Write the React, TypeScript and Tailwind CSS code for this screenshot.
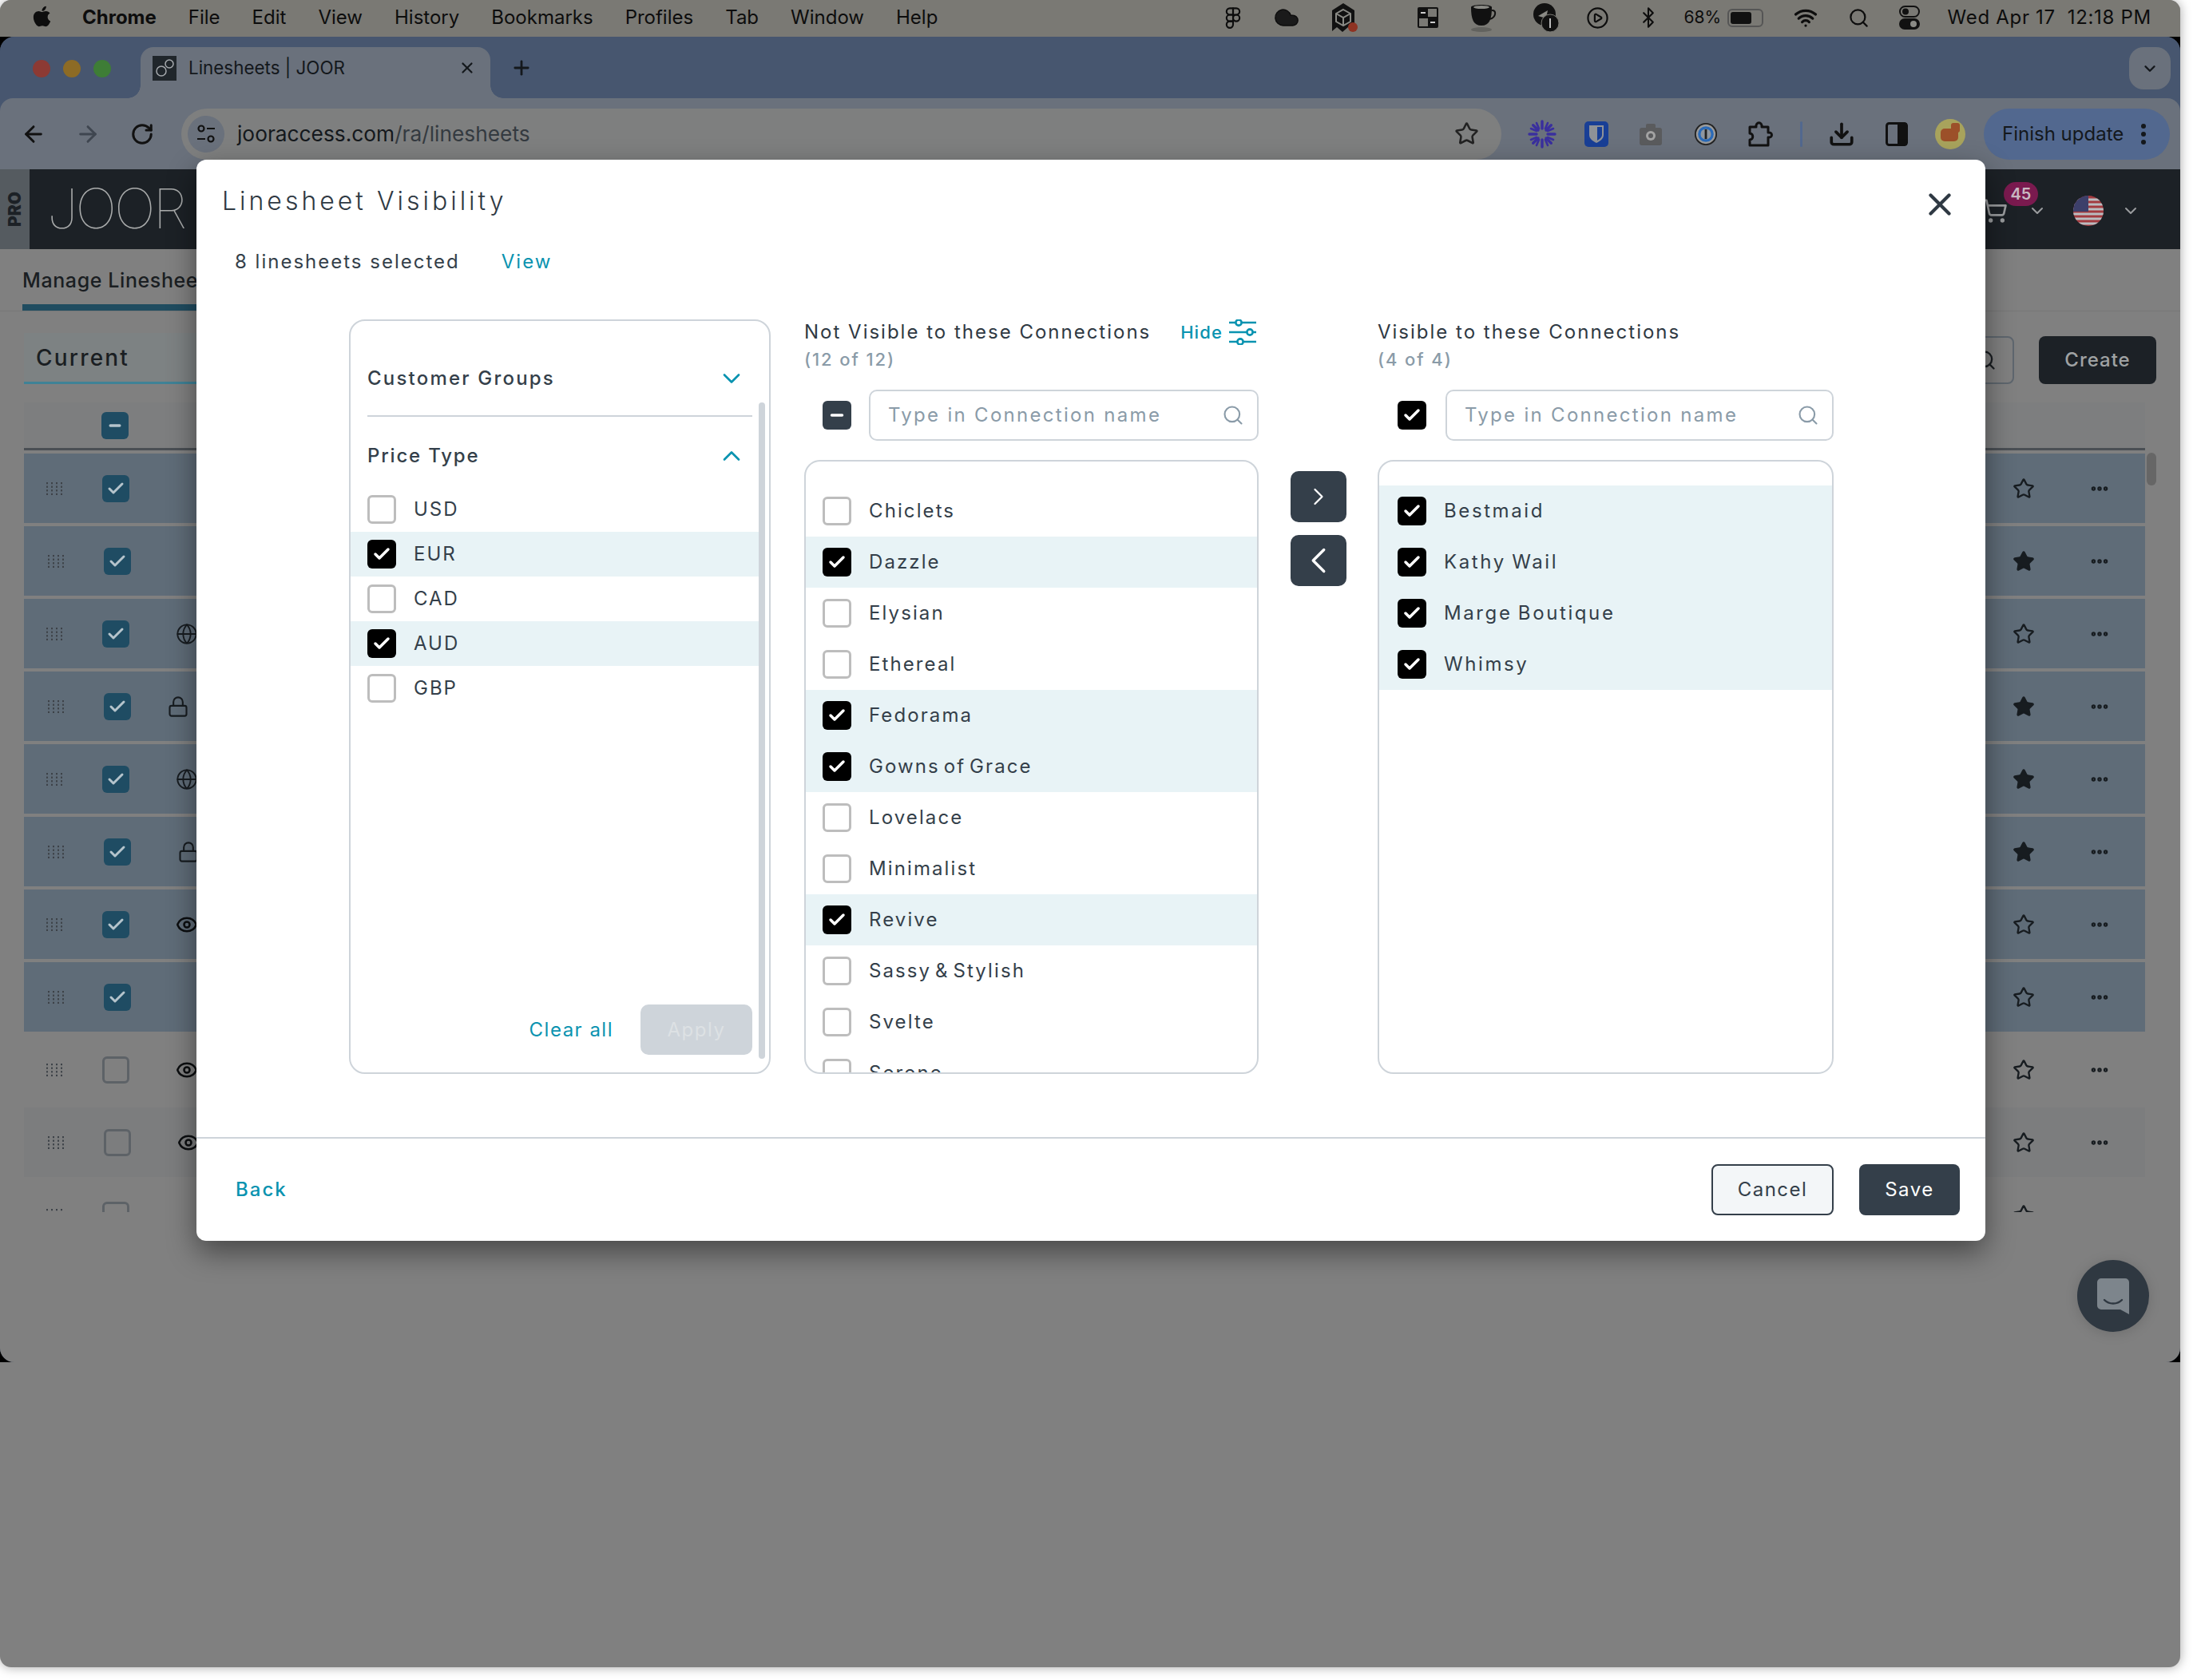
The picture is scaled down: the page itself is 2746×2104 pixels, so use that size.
import { ArrowLeft, ArrowRight, Check, ChevronDown, ChevronLeft, ChevronRight, ChevronUp, Download, Eye, Globe, Lock, Minus, MoreHorizontal, Plus, RotateCw, Search, ShoppingCart, Star, X, Bluetooth, Wifi, Figma, Cloud, PlayCircle } from "lucide-react";
import { FaApple } from "react-icons/fa";

const NOT_VISIBLE = [
  { name: "Chiclets", on: false },
  { name: "Dazzle", on: true },
  { name: "Elysian", on: false },
  { name: "Ethereal", on: false },
  { name: "Fedorama", on: true },
  { name: "Gowns of Grace", on: true },
  { name: "Lovelace", on: false },
  { name: "Minimalist", on: false },
  { name: "Revive", on: true },
  { name: "Sassy & Stylish", on: false },
  { name: "Svelte", on: false },
  { name: "Serene", on: false },
];

const VISIBLE = ["Bestmaid", "Kathy Wail", "Marge Boutique", "Whimsy"];

const PRICE_TYPES = [
  { name: "USD", on: false },
  { name: "EUR", on: true },
  { name: "CAD", on: false },
  { name: "AUD", on: true },
  { name: "GBP", on: false },
];

const ROWS = [
  { on: true, icon: "", star: false },
  { on: true, icon: "", star: true },
  { on: true, icon: "globe", star: false },
  { on: true, icon: "lock", star: true },
  { on: true, icon: "globe", star: true },
  { on: true, icon: "lock2", star: true },
  { on: true, icon: "eye", star: false },
  { on: true, icon: "", star: false },
  { on: false, icon: "eye", star: false },
  { on: false, icon: "eye", star: false },
  { on: false, icon: "", star: false },
];

function Box({ state }: { state: "empty" | "on" | "mixed" }) {
  if (state === "empty") {
    return <span className="block w-[36px] h-[36px] shrink-0 rounded-[6px] border-[3px] border-[#bdbdbd] bg-white" />;
  }
  return (
    <span className={`flex items-center justify-center w-[36px] h-[36px] shrink-0 rounded-[6px] ${state === "on" ? "bg-black" : "bg-[#343f4a]"}`}>
      {state === "on" ? <Check size={24} strokeWidth={3.5} className="text-white" /> : <Minus size={22} strokeWidth={4} className="text-white" />}
    </span>
  );
}

function MenuIcon({ children, className = "" }: { children: React.ReactNode; className?: string }) {
  return <div className={`flex items-center justify-center w-[40px] h-[40px] shrink-0 ${className}`}>{children}</div>;
}

function MenuBar() {
  return (
    <div className="flex items-center h-[46px] shrink-0 pl-[38px] pb-[2px] bg-[#7a7974] text-[#0d0d0d] text-[24px]">
      <FaApple size={29} className="mr-[36px] mb-[3px]" />
      <div className="flex gap-[40px]">
        <span className="font-bold">Chrome</span>
        {["File", "Edit", "View", "History", "Bookmarks", "Profiles", "Tab", "Window", "Help"].map((m) => (
          <span key={m}>{m}</span>
        ))}
      </div>
      <div className="flex items-center ml-auto pr-[36px]">
        <MenuIcon>
          <Figma size={28} strokeWidth={1.8} />
        </MenuIcon>
        <MenuIcon className="ml-[27px]">
          <Cloud size={34} fill="#1a1a1a" strokeWidth={1} />
        </MenuIcon>
        <MenuIcon className="ml-[32px]">
          <svg width="34" height="38" viewBox="0 0 34 38">
            <path d="M16 1 30 10V36L22 31 15 37 8 31 2 36V10Z" fill="#111" />
            <path d="M16 9 25 14V24L16 29 7 24V14ZM7 14 16 19 25 14M16 19V29" fill="none" stroke="#8a8a85" strokeWidth="2" />
            <circle cx="28" cy="31" r="6" fill="#8f3322" />
          </svg>
        </MenuIcon>
        <MenuIcon className="ml-[65px]">
          <svg width="28" height="28" viewBox="0 0 28 28">
            <rect x="1" y="1" width="26" height="26" rx="2" fill="#111" />
            <rect x="14" y="3" width="11" height="10" fill="#7a7974" />
            <rect x="3" y="15" width="11" height="10" fill="#7a7974" />
            <path d="M11 8H5M17 20H23" stroke="#ccc" strokeWidth="2" />
          </svg>
        </MenuIcon>
        <MenuIcon className="ml-[30px]">
          <svg width="34" height="36" viewBox="0 0 34 36">
            <ellipse cx="14" cy="33" rx="13" ry="3" fill="#62625e" />
            <path d="M1 5C1 1 27 1 27 5 27 20 24 28 14 28 4 28 1 20 1 5Z" fill="#111" />
            <ellipse cx="14" cy="5" rx="10" ry="2" fill="#8a8a85" />
            <path d="M27 9C33 8 33 18 24 20" fill="none" stroke="#111" strokeWidth="2" />
          </svg>
        </MenuIcon>
        <MenuIcon className="ml-[39px]">
          <svg width="34" height="38" viewBox="0 0 34 38">
            <circle cx="14" cy="15" r="14" fill="#111" />
            <path d="M6 17 18 10 16 20Z" fill="#8a8a85" />
            <circle cx="21" cy="26" r="11" fill="#111" stroke="#7a7974" strokeWidth="1" />
            <path d="M21 20V32" stroke="#bbb" strokeWidth="2" />
          </svg>
        </MenuIcon>
        <MenuIcon className="ml-[24px]">
          <PlayCircle size={29} strokeWidth={1.8} />
        </MenuIcon>
        <MenuIcon className="ml-[23px]">
          <Bluetooth size={28} strokeWidth={1.8} />
        </MenuIcon>
        <span className="ml-[25px] text-[21px] w-[54px]">68%</span>
        <div className="relative flex items-center w-[45px] h-[23px] rounded-[6px] border-2 border-[#555] p-[2px]">
          <div className="w-[26px] h-full rounded-[3px] bg-[#111]" />
        </div>
        <MenuIcon className="ml-[33px]">
          <Wifi size={30} strokeWidth={2.6} />
        </MenuIcon>
        <MenuIcon className="ml-[27px]">
          <Search size={27} strokeWidth={2} />
        </MenuIcon>
        <MenuIcon className="ml-[23px]">
          <svg width="26" height="30" viewBox="0 0 26 30">
            <rect x="1" y="1" width="24" height="13" rx="6.5" fill="none" stroke="#111" strokeWidth="2" />
            <circle cx="8" cy="7.5" r="4" fill="#111" />
            <rect x="0" y="16" width="26" height="14" rx="7" fill="#111" />
            <circle cx="18" cy="23" r="4" fill="#8a8a85" />
          </svg>
        </MenuIcon>
        <span className="ml-[28px] whitespace-pre text-[24px] tracking-[0.7px]">Wed Apr 17  12:18 PM</span>
      </div>
    </div>
  );
}

function TabStrip() {
  return (
    <div className="flex items-end h-[77px] shrink-0 pl-[41px] pr-[12px] bg-[#47566f]">
      <div className="flex items-center gap-[16px] self-center pt-[2px]">
        <span className="w-[22px] h-[22px] rounded-full bg-[#8c3a34]" />
        <span className="w-[22px] h-[22px] rounded-full bg-[#8d6b25]" />
        <span className="w-[22px] h-[22px] rounded-full bg-[#3e7d36]" />
      </div>
      <div className="relative flex items-center w-[438px] h-[64px] ml-[37px] pl-[15px] pr-[18px] pb-[12px] rounded-t-[16px] bg-[#6a717c]">
        <span className="absolute -left-[16px] bottom-0 w-[16px] h-[16px] bg-[radial-gradient(circle_at_0_0,transparent_15.5px,#6a717c_16px)]" />
        <span className="absolute -right-[16px] bottom-0 w-[16px] h-[16px] bg-[radial-gradient(circle_at_100%_0,transparent_15.5px,#6a717c_16px)]" />
        <span className="flex items-center justify-center w-[30px] h-[31px] bg-[#20262b]">
          <svg width="26" height="26" viewBox="0 0 26 26" fill="none" stroke="#a5a9ad" strokeWidth="1.5">
            <circle cx="9" cy="17" r="6" />
            <circle cx="19" cy="8" r="5" />
          </svg>
        </span>
        <span className="ml-[15px] text-[22.4px] text-[#14181c]">Linesheets | JOOR</span>
        <X size={22} strokeWidth={2.4} className="ml-auto text-[#14181c]" />
      </div>
      <Plus size={28} strokeWidth={2.4} className="ml-[25px] mb-[24px] text-[#14181c]" />
      <div className="flex items-center justify-center w-[52px] h-[53px] ml-auto mb-[11px] rounded-[18px] bg-[#6a717c]">
        <ChevronDown size={22} strokeWidth={2.6} className="text-[#14181c]" />
      </div>
    </div>
  );
}

function Toolbar() {
  return (
    <div className="relative flex items-center h-[89px] shrink-0 pl-[26px] pr-[12px] rounded-t-[16px] bg-[#6a717c] text-[#111]">
      <ArrowLeft size={32} strokeWidth={2.2} />
      <ArrowRight size={32} strokeWidth={2.2} className="ml-[36px] text-[#3f4650]" />
      <RotateCw size={30} strokeWidth={2.4} className="ml-[37px]" />
      <div className="flex items-center w-[1653px] h-[64px] ml-[34px] pl-[8px] pr-[28px] rounded-full bg-[#7e7f7f]">
        <span className="flex items-center justify-center w-[46px] h-[46px] rounded-full bg-[#6a717c]">
          <svg width="26" height="26" viewBox="0 0 26 26" fill="none" stroke="#111" strokeWidth="2.2">
            <circle cx="7" cy="6" r="3.5" />
            <path d="M14 6H24M2 19H12" />
            <circle cx="19" cy="19" r="3.5" />
          </svg>
        </span>
        <span className="ml-[16px] text-[26.3px] text-[#14181c]">
          jooraccess.com<span className="text-[#343a40]">/ra/linesheets</span>
        </span>
        <Star size={31} strokeWidth={2} className="ml-auto text-[#222]" />
      </div>
      <div className="flex items-center ml-[31px]">
        <MenuIcon>
          <svg width="36" height="36" viewBox="0 0 36 36" stroke="#3a2f9e" strokeWidth="3.4" strokeLinecap="round">
            <path d="M18 2V11M18 25V34M2 18H11M25 18H34M6.7 6.7 13 13M23 23 29.3 29.3M29.3 6.7 23 13M13 23 6.7 29.3" />
            <path d="M11 4 14 11M25 4 22 11M11 32 14 25M25 32 22 25M4 11 11 14M32 11 25 14M4 25 11 22M32 25 25 22" strokeWidth="2.6" />
          </svg>
        </MenuIcon>
        <MenuIcon className="ml-[28px]">
          <svg width="30" height="32" viewBox="0 0 30 32">
            <rect width="30" height="32" rx="5" fill="#193f96" />
            <path d="M6 5H24V17C24 22 19 25 15 27 11 25 6 22 6 17Z" fill="#8f9297" />
            <path d="M16 7H22V17C22 20 19 22 16 24Z" fill="#193f96" />
          </svg>
        </MenuIcon>
        <MenuIcon className="ml-[28px]">
          <svg width="28" height="28" viewBox="0 0 28 28">
            <rect y="6" width="28" height="22" rx="3" fill="#5a5b5d" />
            <rect x="8" y="1" width="12" height="8" rx="2" fill="#5a5b5d" />
            <circle cx="14" cy="16" r="6" fill="#a3a3a3" />
            <circle cx="14" cy="16" r="3" fill="#5a5b5d" />
          </svg>
        </MenuIcon>
        <MenuIcon className="ml-[29px]">
          <svg width="30" height="32" viewBox="0 0 32 32">
            <circle cx="16" cy="16" r="15" fill="#222" />
            <circle cx="16" cy="16" r="13" fill="#9a9a9a" />
            <circle cx="16" cy="16" r="10.5" fill="#2a6ab8" />
            <circle cx="16" cy="16" r="7" fill="#8f969f" />
            <rect x="14.5" y="9.5" width="3" height="13" fill="#222" />
          </svg>
        </MenuIcon>
        <MenuIcon className="ml-[28px]">
          <svg width="32" height="34" viewBox="0 0 32 34" fill="none" stroke="#111" strokeWidth="3" strokeLinejoin="round">
            <path d="M3 8H11C10 1 19 1 18 8H26V15C32 14 32 22 26 21V31H3V24C8 24 8 16 3 16Z" />
          </svg>
        </MenuIcon>
        <span className="w-[3px] h-[32px] ml-[30px] rounded bg-[#52688f]" />
        <MenuIcon className="ml-[29px]">
          <Download size={34} strokeWidth={2.6} />
        </MenuIcon>
        <MenuIcon className="ml-[29px]">
          <svg width="28" height="30" viewBox="0 0 28 30">
            <rect x="1.5" y="1.5" width="25" height="27" rx="3" fill="none" stroke="#111" strokeWidth="3" />
            <rect x="15" y="1.5" width="12" height="27" fill="#111" />
          </svg>
        </MenuIcon>
        <span className="relative w-[38px] h-[38px] ml-[28px] rounded-full overflow-hidden bg-[#a8a35c]">
          <span className="absolute left-[7px] top-[12px] w-[22px] h-[16px] rounded-[5px] bg-[#9c5029]" />
          <span className="absolute left-[20px] top-[5px] w-[11px] h-[12px] rounded-[3px] bg-[#9c5029]" />
        </span>
        <div className="flex items-center w-[233px] h-[64px] ml-[23px] pl-[23px] rounded-full bg-[#52688f]">
          <span className="text-[24px] text-[#14181c]">Finish update</span>
          <svg width="8" height="28" viewBox="0 0 8 28" className="ml-[21px]" fill="#14181c">
            <circle cx="4" cy="4" r="3" />
            <circle cx="4" cy="14" r="3" />
            <circle cx="4" cy="24" r="3" />
          </svg>
        </div>
      </div>
    </div>
  );
}

function Nav() {
  return (
    <div className="flex items-stretch h-[100px] shrink-0 bg-[#1c2126]">
      <div className="flex items-center justify-center w-[37px] bg-[#555b60]">
        <span className="rotate-180 [writing-mode:vertical-rl] text-[21px] font-black text-[#1c2126]">PRO</span>
      </div>
      <span className="ml-[22px] self-center text-[69px] font-thin tracking-[-3px] text-[#a9abab]">JOOR</span>
      <div className="relative flex items-center ml-auto pr-[50px] pt-[4px]">
        <div className="relative mr-[5px]">
          <ShoppingCart size={32} strokeWidth={2} className="text-[#9a9c9e]" />
          <span className="absolute -top-[20px] left-[27px] flex items-center justify-center w-[43px] h-[30px] rounded-full bg-[#7a1a4f] text-[20px] font-semibold text-[#c9b9c2]">45</span>
        </div>
        <ChevronDown size={24} strokeWidth={2} className="ml-[20px] text-[#9a9c9e]" />
        <svg width="38" height="38" viewBox="0 0 38 38" className="ml-[33px] rounded-full">
          <rect width="38" height="38" fill="#a33a3f" />
          <path d="M0 5H38M0 11H38M0 17H38M0 23H38M0 29H38M0 35H38" stroke="#b9bcc0" strokeWidth="3" />
          <rect width="19" height="20" fill="#3c3f6a" />
        </svg>
        <ChevronDown size={24} strokeWidth={2} className="ml-[22px] text-[#9a9c9e]" />
      </div>
    </div>
  );
}

function TableRow({ row, i }: { row: (typeof ROWS)[number]; i: number }) {
  const odd = i % 2 === 1;
  return (
    <div className={`flex items-center shrink-0 h-[87px] pr-[44px] ${row.on ? "bg-[#5f6c78]" : i === 9 ? "bg-[#7c7d7e]" : ""} ${odd ? "pl-[30px]" : "pl-[28px]"}`}>
      <svg width="20" height="16" viewBox="0 0 20 16" fill="#3d4248" className="shrink-0">
        {[0, 6, 12, 18].map((x) => [0, 4.6, 9.2, 13.8].map((y) => <rect key={`${x}-${y}`} x={x} y={y} width="2" height="2.2" />))}
      </svg>
      <span className={`flex items-center justify-center shrink-0 w-[34px] h-[34px] ml-[50px] rounded-[6px] ${row.on ? "bg-[#1f4c63]" : "border-[3px] border-[#5d6267]"}`}>
        {row.on && <Check size={24} strokeWidth={3} className="text-[#b5c4cc]" />}
      </span>
      <span className={`flex items-center justify-center w-[34px] h-[34px] ${row.icon === "lock" ? "ml-[42px]" : "ml-[55px]"}`}>
        {row.icon === "globe" && <Globe size={28} strokeWidth={1.6} className="text-[#171c20]" />}
        {(row.icon === "lock" || row.icon === "lock2") && <Lock size={28} strokeWidth={1.8} className="text-[#171c20]" />}
        {row.icon === "eye" && <Eye size={28} strokeWidth={2.2} className="text-[#0c0e10]" />}
      </span>
      <Star size={28} strokeWidth={2} className={`ml-auto ${row.star ? "fill-[#171c20]" : ""} text-[#171c20]`} />
      <MoreHorizontal size={26} strokeWidth={3} className="ml-[68px] text-[#171c20]" />
    </div>
  );
}

function Page() {
  return (
    <div className="flex-1 flex flex-col bg-[#808080] min-h-0">
      <div className="flex items-end h-[78px] shrink-0 pl-[28px] border-b border-[#777]">
        <span className="flex items-center w-[400px] h-[66px] border-b-[8px] border-[#204c60] text-[25px] font-medium tracking-[0.6px] text-[#1a1e22]">Manage Linesheets</span>
      </div>
      <div className="flex items-start h-[114px] shrink-0 pt-[27px] pl-[30px] pr-[30px]">
        <div className="flex items-center w-[300px] h-[64px] pl-[15px] bg-[#7d8283] border-b-[3px] border-[#3f8296] text-[28px] font-medium tracking-[2.2px] text-[#1a1e22]">Current</div>
        <div className="flex items-center justify-end w-[200px] h-[60px] ml-auto mt-[4px] pr-[20px] rounded-[8px] border-2 border-[#5e666e]">
          <Search size={28} strokeWidth={2} className="text-[#1a1e22]" />
        </div>
        <div className="flex items-center justify-center w-[147px] h-[60px] ml-[31px] mt-[4px] rounded-[8px] bg-[#1c2126] text-[24px] font-medium tracking-[1px] text-[#9fa2a3]">Create</div>
      </div>
      <div className="flex items-start pl-[30px]">
        <div className="w-[2656px] h-[1014px] overflow-hidden">
          <div className="flex items-center h-[60px] pl-[97px] bg-[#7d7e7f] border-b-[3px] border-[#4a4f54]">
            <span className="flex items-center justify-center w-[34px] h-[34px] rounded-[6px] bg-[#1f4c63]">
              <Minus size={20} strokeWidth={4} className="text-[#b5c4cc]" />
            </span>
          </div>
          <div className="flex flex-col gap-[4px] mt-[4px]">
            {ROWS.map((r, i) => (
              <TableRow key={i} row={r} i={i} />
            ))}
          </div>
        </div>
        <span className="w-[12px] h-[41px] ml-[2px] mt-[63px] rounded-full bg-[#666]" />
      </div>
    </div>
  );
}

function FilterPanel() {
  return (
    <div className="relative flex flex-col w-[528px] h-[945px] rounded-[20px] border-2 border-[#ced4da]">
      <div className="flex items-center justify-between h-[120px] pt-[26px] mx-[21px] border-b-2 border-[#ced4da] text-[24px] font-medium tracking-[2.2px] text-[#343f4a]">
        Customer Groups
        <ChevronDown size={36} strokeWidth={1.8} className="mr-[8px] text-[#0a93b0]" />
      </div>
      <div className="flex items-center justify-between h-[88px] pt-[10px] mx-[21px] text-[24px] font-medium tracking-[1.8px] text-[#343f4a]">
        Price Type
        <ChevronUp size={36} strokeWidth={1.8} className="mr-[8px] text-[#0a93b0]" />
      </div>
      <div className="flex flex-col mr-[13px]">
        {PRICE_TYPES.map((p) => (
          <div key={p.name} className={`flex items-center h-[56px] pl-[21px] gap-[22px] ${p.on ? "bg-[#e8f3f6]" : ""}`}>
            <Box state={p.on ? "on" : "empty"} />
            <span className="text-[24px] tracking-[2px] text-[#343f4a]">{p.name}</span>
          </div>
        ))}
      </div>
      <div className="flex items-center justify-end gap-[34px] mt-auto mb-[22px] mr-[21px]">
        <span className="text-[24px] tracking-[1.5px] text-[#0a93b0]">Clear all</span>
        <span className="flex items-center justify-center w-[140px] h-[63px] rounded-[10px] bg-[#ced4da] text-[24px] tracking-[1.5px] text-[#dde1e4]">Apply</span>
      </div>
      <span className="absolute right-[5px] top-[102px] bottom-[17px] w-[8px] rounded-full bg-[#ced4da]" />
    </div>
  );
}

function ColumnHead({ title, count, hide }: { title: string; count: string; hide?: boolean }) {
  return (
    <div className="h-[88px] shrink-0 pt-[2px]">
      <div className="flex items-center h-[28px]">
        <span className="text-[24px] tracking-[2px] text-[#2f3943] whitespace-nowrap">{title}</span>
        {hide && (
          <span className="flex items-center gap-[8px] ml-auto pr-[3px] text-[22px] font-medium tracking-[1.1px] text-[#0a93b0]">
            Hide
            <svg width="34" height="32" viewBox="0 0 34 32" fill="none" stroke="#0a93b0" strokeWidth="2.6">
              <path d="M0 4H8M16 4H34M0 16H22M30 16H34M0 28H10M18 28H34" />
              <circle cx="12" cy="4" r="3.6" />
              <circle cx="26" cy="16" r="3.6" />
              <circle cx="14" cy="28" r="3.6" />
            </svg>
          </span>
        )}
      </div>
      <div className="mt-[4px] text-[22px] font-medium tracking-[1.9px] text-[#8a9ba8]">{count}</div>
    </div>
  );
}

function SearchRow({ state }: { state: "on" | "mixed" }) {
  return (
    <div className={`flex items-center h-[64px] shrink-0 ${state === "on" ? "pl-[25px] gap-[24px]" : "pl-[23px] gap-[22px]"}`}>
      <Box state={state} />
      <div className="flex items-center flex-1 h-full pl-[22px] pr-[16px] rounded-[10px] border-2 border-[#ced4da]">
        <span className="text-[24px] tracking-[2.3px] text-[#8a9ba8]">Type in Connection name</span>
        <Search size={28} strokeWidth={1.8} className="ml-auto text-[#8a9ba8]" />
      </div>
    </div>
  );
}

function ListRow({ name, on, inset }: { name: string; on: boolean; inset?: boolean }) {
  return (
    <div className={`flex items-center h-[64px] shrink-0 gap-[22px] ${inset ? "pl-[23px]" : "pl-[21px]"} ${on ? "bg-[#e8f3f6]" : ""}`}>
      <Box state={on ? "on" : "empty"} />
      <span className={`text-[24px] text-[#343f4a] ${inset ? "tracking-[2.6px] [word-spacing:-2px]" : "tracking-[2.1px] [word-spacing:-4px]"}`}>{name}</span>
    </div>
  );
}

function Modal() {
  return (
    <div className="absolute left-[246px] top-[200px] flex flex-col w-[2240px] h-[1354px] rounded-[12px] bg-white shadow-[0_14px_36px_rgba(0,0,0,0.45)]">
      <div className="flex items-center justify-between h-[104px] shrink-0 pl-[32px] pr-[34px]">
        <span className="text-[32px] font-light tracking-[4px] text-[#2f3943]">Linesheet Visibility</span>
        <X size={46} strokeWidth={2.2} className="mt-[8px] text-[#2f3943]" />
      </div>
      <div className="flex items-center h-[48px] shrink-0 pl-[48px] text-[24px] tracking-[2px] text-[#343f4a]">
        8 linesheets selected
        <span className="ml-[52px] text-[#0a93b0]">View</span>
      </div>
      <div className="flex h-[945px] shrink-0 mt-[48px] pl-[191px]">
        <FilterPanel />
        <div className="flex flex-col w-[569px] ml-[42px]">
          <ColumnHead title="Not Visible to these Connections" count="(12 of 12)" hide />
          <SearchRow state="mixed" />
          <div className="flex-1 mt-[24px] pt-[30px] rounded-[20px] border-2 border-[#ced4da] overflow-hidden">
            {NOT_VISIBLE.map((c) => (
              <ListRow key={c.name} name={c.name} on={c.on} />
            ))}
          </div>
        </div>
        <div className="flex flex-col gap-[16px] w-[70px] ml-[40px] pt-[190px]">
          <span className="flex items-center justify-center h-[64px] rounded-[10px] bg-[#343f4a]">
            <ChevronRight size={36} strokeWidth={1.5} className="text-white" />
          </span>
          <span className="flex items-center justify-center h-[64px] rounded-[10px] bg-[#343f4a]">
            <ChevronLeft size={54} strokeWidth={1.5} className="text-white" />
          </span>
        </div>
        <div className="flex flex-col w-[571px] ml-[39px]">
          <ColumnHead title="Visible to these Connections" count="(4 of 4)" />
          <SearchRow state="on" />
          <div className="flex-1 mt-[24px] pt-[30px] rounded-[20px] border-2 border-[#ced4da] overflow-hidden">
            {VISIBLE.map((c) => (
              <ListRow key={c} name={c} on inset />
            ))}
          </div>
        </div>
      </div>
      <div className="flex items-center flex-1 mt-[79px] pl-[49px] pr-[32px] border-t-2 border-[#ced4da]">
        <span className="text-[24px] font-medium tracking-[2px] text-[#0a93b0]">Back</span>
        <span className="flex items-center justify-center w-[153px] h-[64px] ml-auto rounded-[8px] border-2 border-[#343f4a] bg-[#f3f6f8] text-[24px] tracking-[1.5px] text-[#343f4a]">Cancel</span>
        <span className="flex items-center justify-center w-[126px] h-[64px] ml-[32px] rounded-[8px] bg-[#343f4a] text-[24px] tracking-[1.5px] text-white">Save</span>
      </div>
    </div>
  );
}

export default function App() {
  return (
    <div className="relative w-[2746px] h-[2104px] overflow-hidden bg-white [font-family:Inter,sans-serif]">
      <div className="relative flex flex-col w-[2730px] h-[2088px] overflow-hidden rounded-[14px] bg-[#808080] shadow-[0_0_14px_rgba(0,0,0,0.35)]">
        <MenuBar />
        <div className="h-[1660px] shrink-0 bg-black">
          <div className="flex flex-col h-full overflow-hidden rounded-[18px] bg-[#47566f]">
            <TabStrip />
            <Toolbar />
            <Nav />
            <Page />
          </div>
        </div>
        <Modal />
        <div className="absolute left-[2601px] top-[1578px] flex items-center justify-center w-[90px] h-[90px] rounded-full bg-[#2f3841] shadow-[0_2px_16px_rgba(0,0,0,0.15)]">
          <svg width="42" height="46" viewBox="0 0 42 46">
            <path d="M6 1H36A5 5 0 0 1 41 6V46L30 40H6A5 5 0 0 1 1 35V6A5 5 0 0 1 6 1Z" fill="#7d858c" />
            <path d="M10 28C16 34 26 34 32 28" fill="none" stroke="#2f3841" strokeWidth="2.4" strokeLinecap="round" />
          </svg>
        </div>
      </div>
    </div>
  );
}
